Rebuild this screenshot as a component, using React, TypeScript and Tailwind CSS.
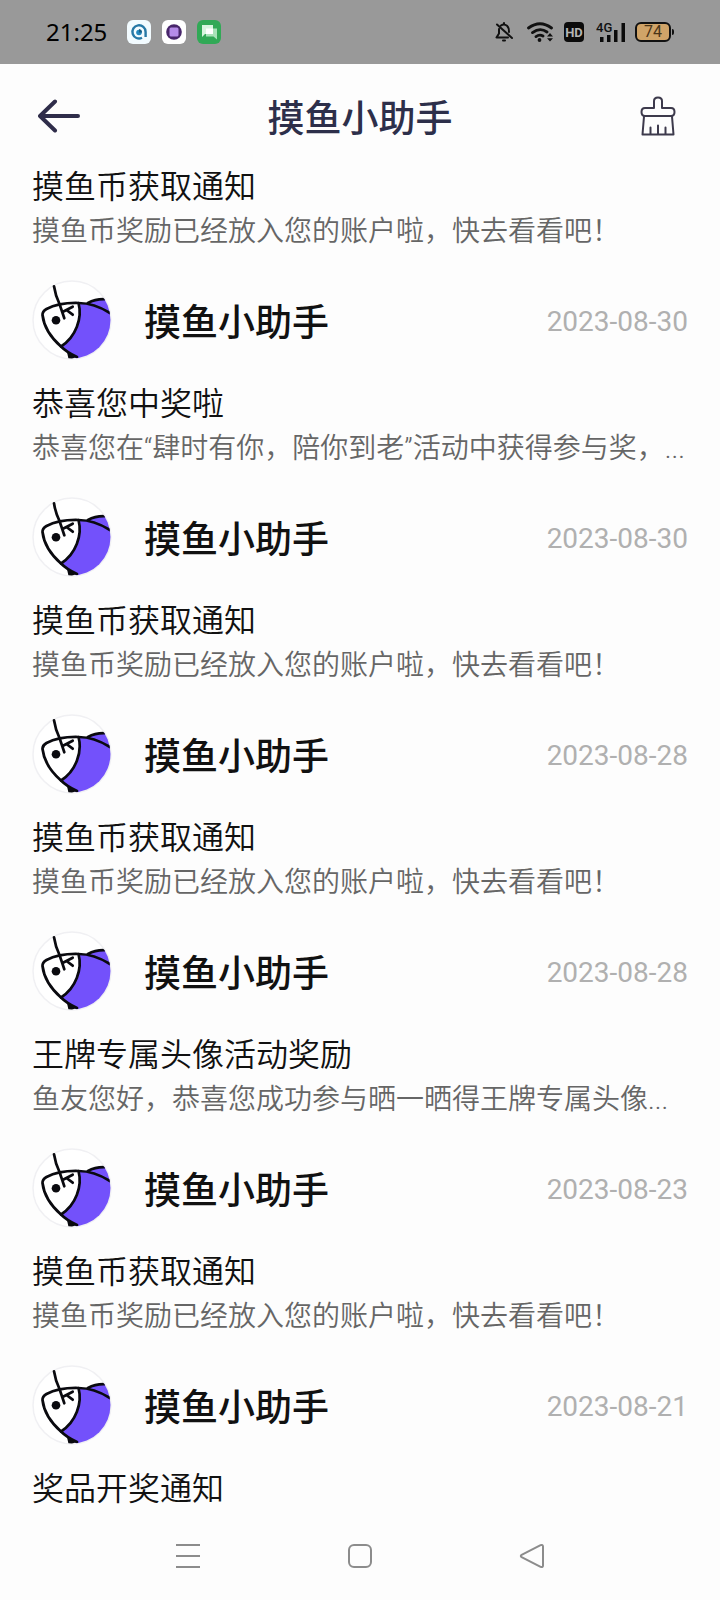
interface Notice {
  id: number;
  date: string;
  title: string;
  body?: string;
}

const SENDER = "摸鱼小助手";
const COIN_TITLE = "摸鱼币获取通知";
const COIN_BODY = "摸鱼币奖励已经放入您的账户啦，快去看看吧！";

const notices: Notice[] = [
  {
    id: 1,
    date: "2023-08-30",
    title: "恭喜您中奖啦",
    body: "恭喜您在“肆时有你，陪你到老”活动中获得参与奖，...",
  },
  { id: 2, date: "2023-08-30", title: COIN_TITLE, body: COIN_BODY },
  { id: 3, date: "2023-08-28", title: COIN_TITLE, body: COIN_BODY },
  {
    id: 4,
    date: "2023-08-28",
    title: "王牌专属头像活动奖励",
    body: "鱼友您好，恭喜您成功参与晒一晒得王牌专属头像...",
  },
  { id: 5, date: "2023-08-23", title: COIN_TITLE, body: COIN_BODY },
  { id: 6, date: "2023-08-21", title: "奖品开奖通知" },
];

export default function App() {
  return (
    <div className="flex min-h-screen flex-col bg-[#fdfdfd] font-['Roboto','Noto_Sans_CJK_SC',sans-serif] text-[#111]">
      <StatusBar />
      <header className="flex h-25 items-center justify-between px-8 pt-1">
        <button type="button" aria-label="返回" className="flex w-14 items-center">
          <BackIcon />
        </button>
        <h1 className="pt-1.5 text-[37px] font-medium leading-none text-[#2d2f4a]">{SENDER}</h1>
        <button type="button" aria-label="清理" className="flex w-14 items-center justify-end pr-3">
          <BrushIcon />
        </button>
      </header>

      <main className="flex-1 px-8">
        <section className="pb-[26px]">
          <NoticeText title={COIN_TITLE} body={COIN_BODY} />
        </section>
        {notices.map((n) => (
          <section key={n.id} className="pb-[26px] last:pb-0">
            <div className="mb-[21px] flex h-20 items-center">
              <FishAvatar />
              <h2 className="ml-8 flex-1 pt-1.5 text-[37px] font-medium leading-none">{SENDER}</h2>
              <time className="pt-1 text-[28px] leading-none text-[#b0b0b0]">{n.date}</time>
            </div>
            <NoticeText title={n.title} body={n.body} />
          </section>
        ))}
      </main>

      <nav className="flex h-22 items-center justify-around px-[102px]">
        <button type="button" aria-label="最近任务">
          <svg width="26" height="26" viewBox="0 0 26 26" stroke="#8c8c8c" strokeWidth="2">
            <path d="M1 2h24M1 13h24M1 24h24" />
          </svg>
        </button>
        <button type="button" aria-label="主屏幕">
          <svg width="26" height="26" viewBox="0 0 26 26" fill="none" stroke="#8c8c8c" strokeWidth="2">
            <rect x="2" y="2" width="22" height="22" rx="5" />
          </svg>
        </button>
        <button type="button" aria-label="返回上一页">
          <svg width="26" height="26" viewBox="0 0 26 26" fill="none" stroke="#8c8c8c" strokeWidth="2" strokeLinejoin="round">
            <path d="M2.6 11.8 21.6 2.2Q24 1.2 24 3.6V22.4Q24 24.8 21.6 23.8L2.6 14.2Q1 13 2.6 11.8Z" />
          </svg>
        </button>
      </nav>
    </div>
  );
}

function NoticeText({ title, body }: { title: string; body?: string }) {
  return (
    <>
      <h3 className="text-[32px] font-[350] leading-[46px]">{title}</h3>
      {body && (
        <p className="overflow-hidden text-[28px] font-[350] leading-[44px] whitespace-nowrap text-[#666]">{body}</p>
      )}
    </>
  );
}

function StatusBar() {
  return (
    <div className="flex h-16 items-center justify-between bg-[#999] pr-[46px] pl-[46px] text-black">
      <div className="flex items-center">
        <span className="mr-5 font-['Noto_Sans'] text-2xl leading-none">21:25</span>
        <div className="flex gap-[11px]">
          <svg width="24" height="24" viewBox="0 0 24 24" fill="none">
            <rect width="24" height="24" rx="6" fill="#f2fbff" />
            <path d="M15 17.8A6.6 6.6 0 1 1 18.6 12v5" stroke="#2678a6" strokeWidth="2.4" />
            <circle cx="12" cy="12.5" r="2.8" fill="#2487bd" />
            <path d="M12 12.5V9a3.5 3.5 0 0 1 3 3.5Z" fill="#175e83" />
          </svg>
          <svg width="24" height="24" viewBox="0 0 24 24">
            <rect width="24" height="24" rx="6" fill="#fff" />
            <circle cx="12" cy="12" r="7.8" fill="#48266b" />
            <rect x="7.5" y="7.5" width="9" height="9" rx="1.5" fill="#b58be8" />
          </svg>
          <svg width="24" height="24" viewBox="0 0 24 24">
            <rect width="24" height="24" rx="6" fill="#31a956" />
            <path d="M9 8.5h11v11l-3.5-3H9Z" fill="#a9e3b9" />
            <path d="M5 5h11v9H8l-3 3Z" fill="#d8f5df" />
            <path d="M9 8.5h7V14H9Z" fill="#fff" />
          </svg>
        </div>
      </div>

      <div className="flex items-center">
        <svg className="mr-3.5" width="18" height="20" viewBox="0 0 18 20" fill="none" stroke="#111" strokeWidth="2" strokeLinecap="round" strokeLinejoin="round">
          <path d="M2 2.5 17 16M6 3.5Q9 1.2 12 3.8 14 5.5 14 10M4 7v4.5L1.5 15.5H13" />
          <path d="M9 1v1M8 18.6h2" />
        </svg>
        <svg className="mr-2.5" width="27" height="20" viewBox="0 0 27 20" fill="none" stroke="#111" strokeWidth="2.8" strokeLinecap="round">
          <path d="M1.5 6Q13 -2.5 24.5 6M5.5 10.6Q13 5 20 10M9 14.6Q12.5 12 16 14" />
          <circle cx="12.5" cy="18" r="1.9" fill="#111" stroke="none" />
          <path d="M20 14.4 23 11l3 3.4ZM20 16.2l3 3.4 3-3.4Z" fill="#111" stroke="none" />
        </svg>
        <span className="mr-3 flex h-5 w-5 items-center justify-center rounded-sm bg-[#0b0b0b] text-[13px] font-bold leading-none text-[#b5b5b5]">
          HD
        </span>
        <svg className="mr-2.5" width="29" height="30" viewBox="0 -5 29 30">
          <text x="0" y="10" fontSize="13" fontWeight="500" fill="#111">4G</text>
          <path d="M4 15h3.5v5H4ZM11 13h3.5v7H11ZM18 8h3.5v12H18ZM25.5 1H29v19h-3.5Z" fill="#0b0b0b" />
        </svg>
        <span className="flex h-5 w-9 items-center justify-center rounded-md border-2 border-[#111] bg-[#d0a468] text-base leading-none text-[#4a3518]">
          74
        </span>
        <span className="ml-px h-1.5 w-0.5 rounded-r-sm bg-[#111]" />
      </div>
    </div>
  );
}

function BackIcon() {
  return (
    <svg className="ml-1.5" width="42" height="34" viewBox="0 0 42 34" fill="none" stroke="#2f2d4a" strokeWidth="4" strokeLinecap="round" strokeLinejoin="round">
      <path d="M40 17H2M17 2.5 2 17l15 14.5" />
    </svg>
  );
}

function BrushIcon() {
  return (
    <svg width="36" height="40" viewBox="0 0 36 40" fill="none" stroke="#3d3a4c" strokeWidth="2" strokeLinecap="round" strokeLinejoin="round">
      <path d="M14 12V5Q14 1.5 18 1.5T22 5V12H31Q34.5 12 34.5 16T31 20H5Q1.5 20 1.5 16T5 12Z" />
      <path d="M4 20.5 2.5 38.5H33.5L32 20.5M10.5 31.5V38M18 29.5V38M25.5 31.5V38" />
    </svg>
  );
}

function FishAvatar() {
  return (
    <svg className="shrink-0" width="80" height="80" viewBox="0 0 80 80" fill="none" stroke="#0a0a0f" strokeWidth="2.7" strokeLinecap="round" strokeLinejoin="round">
      <clipPath id="avatar-clip">
        <circle cx="40" cy="40" r="38.5" />
      </clipPath>
      <circle cx="40" cy="40" r="39" fill="#fff" stroke="#f0f0f3" strokeWidth="1.5" />
      <g clipPath="url(#avatar-clip)">
        <path d="M46.5 23Q63 23 80 34V80H46L29 66.5C44 57 50.5 38 46.5 23Z" fill="#7351fb" stroke="none" />
        <path d="M55 23.5Q64 18 80 19V34Q67 26.5 55 23.5Z" fill="#7351fb" stroke="none" />
        <path d="M56 23Q63 19 72.5 19.2M46.5 23Q62 23 78 33" />
        <path d="M10.5 35Q10.3 31.5 14.5 29 27 22.5 46.5 23C50.5 38 44 57 29 66.5Q12.5 52 10.5 35Z" />
        <path d="M29 66.5Q35 72.5 45 77" />
        <path d="M35 72 36.5 79H40L44 77Z" fill="#0a0a0f" stroke="none" />
      </g>
      <circle cx="24" cy="40.3" r="4.3" fill="#0a0a0f" stroke="none" />
      <path d="M22 6.3Q23.5 16 27.5 24L30.3 32.3 32.3 38.3M40.7 26.7 30.5 32M34.5 30 40.7 34.7" />
    </svg>
  );
}
